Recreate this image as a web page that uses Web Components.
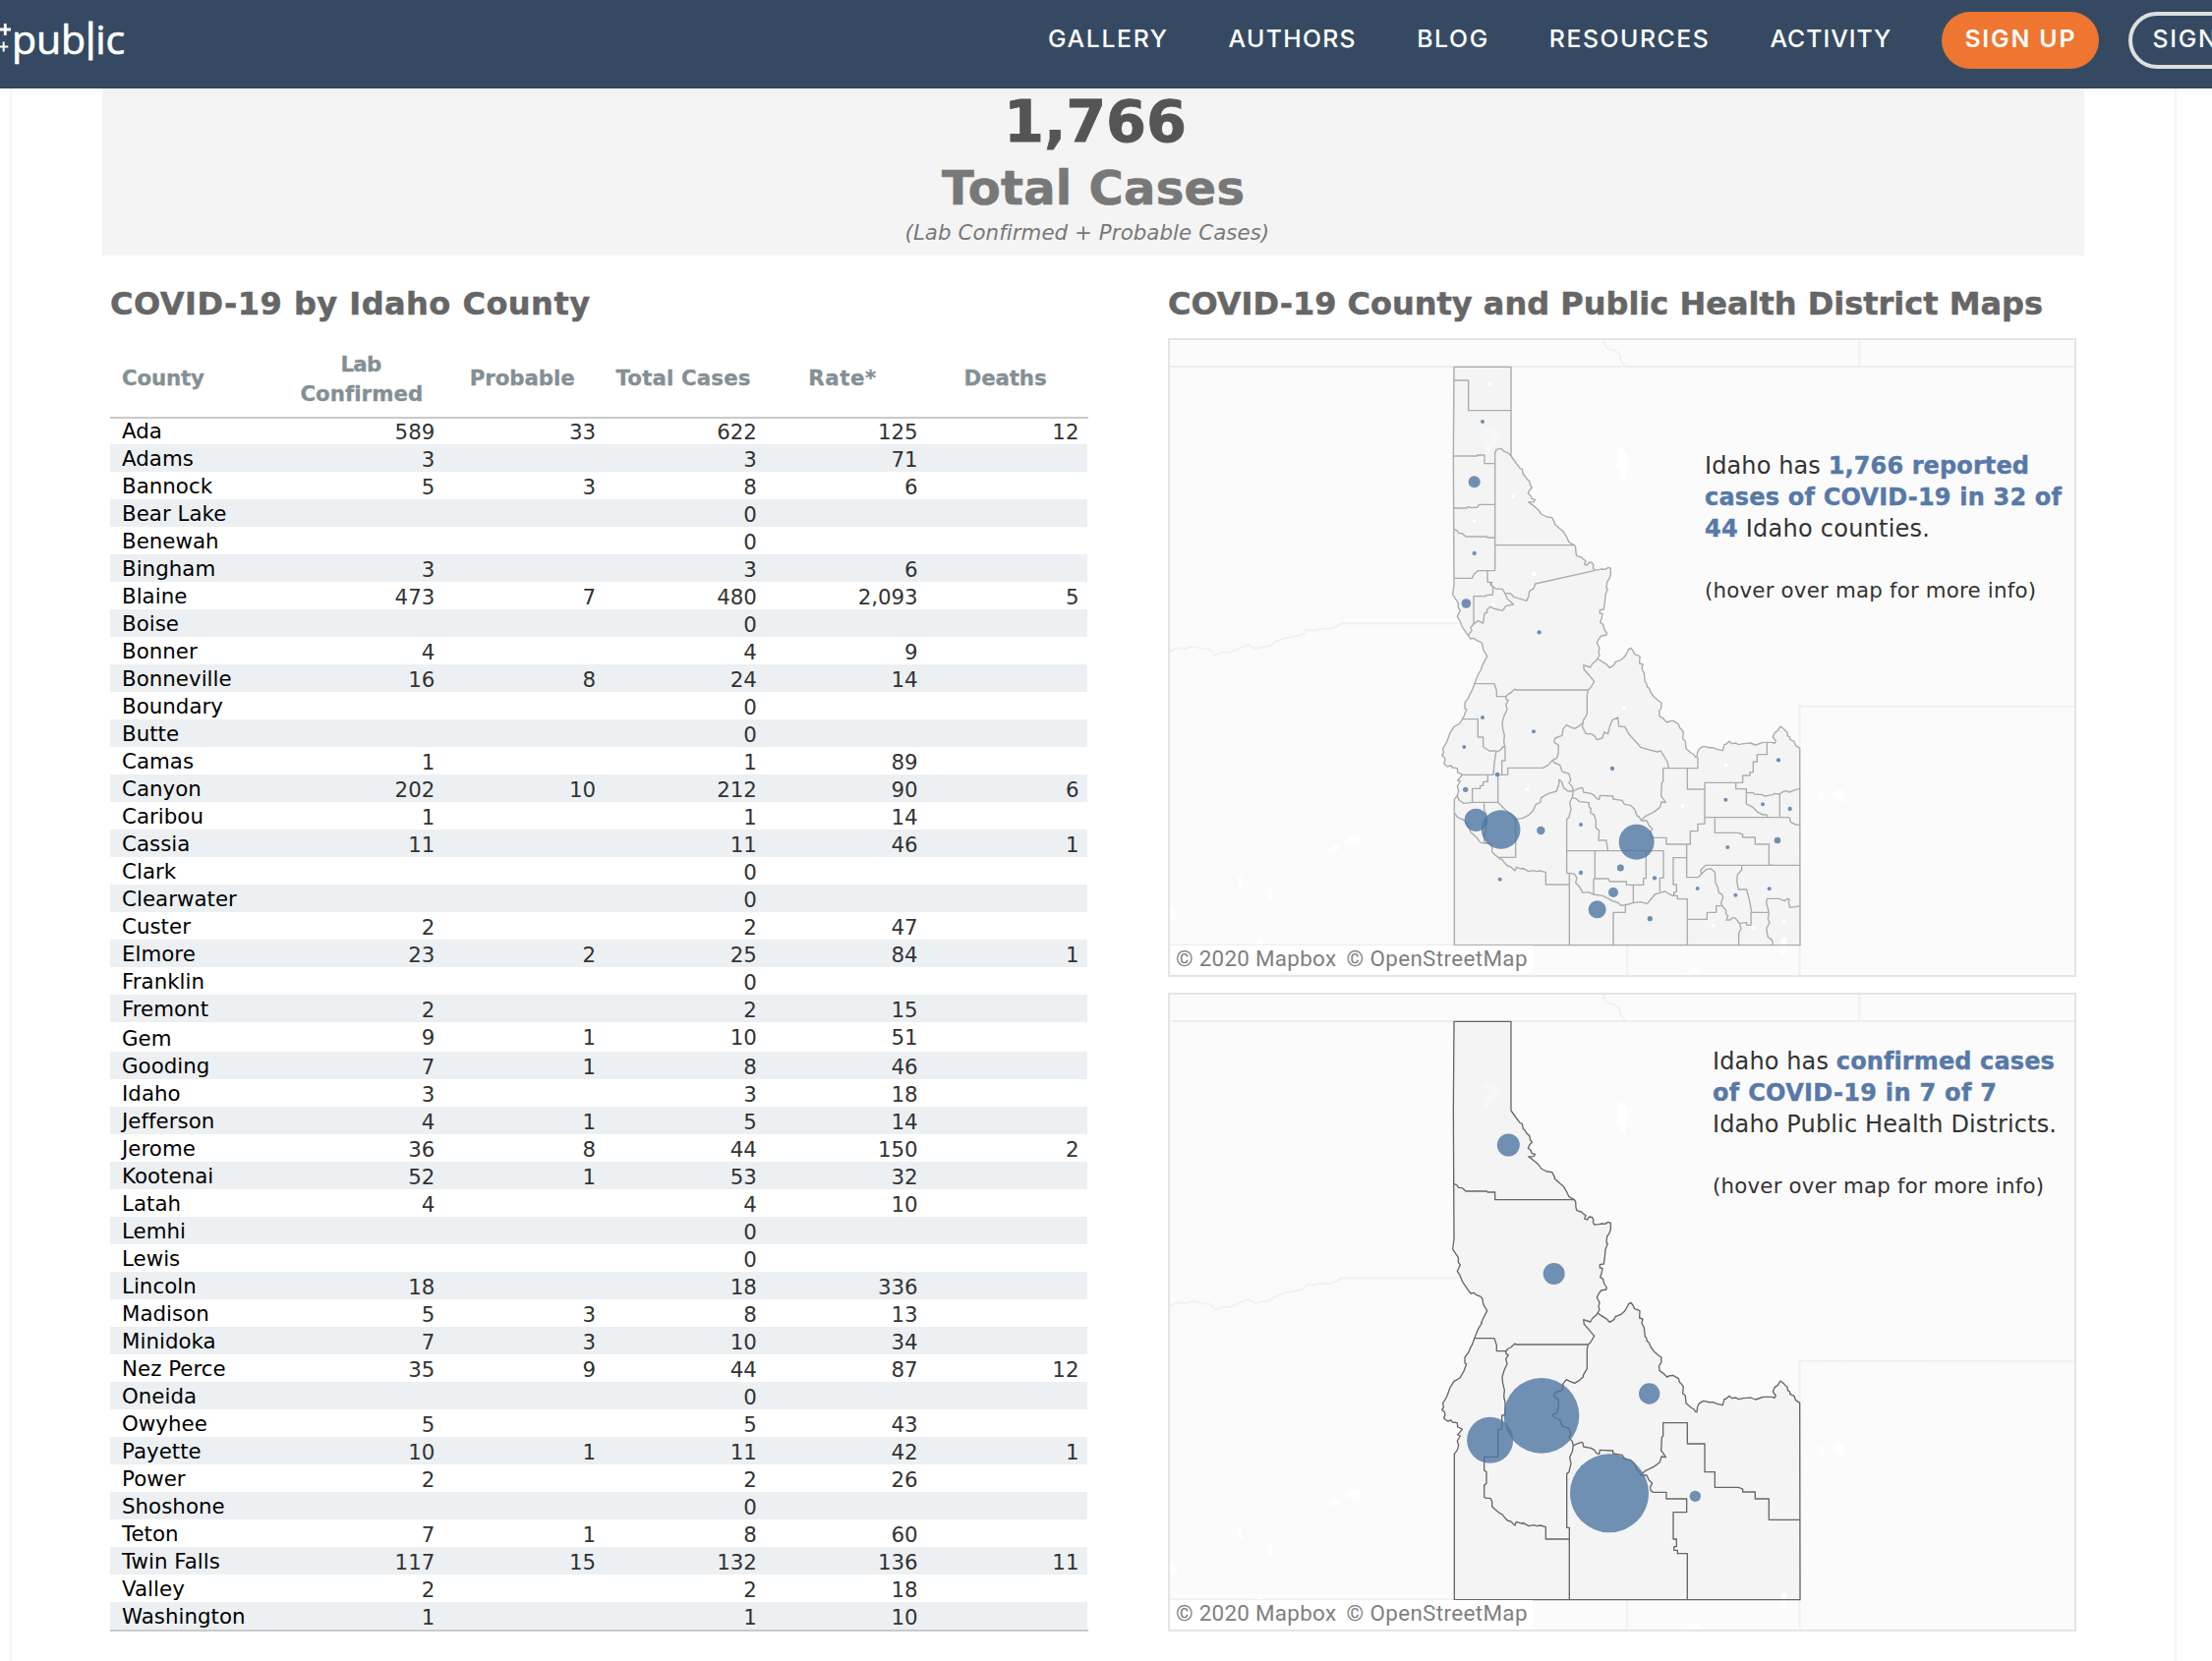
<!DOCTYPE html>
<html lang="en">
<head>
<meta charset="utf-8">
<title>COVID-19 in Idaho</title>
<style>
html,body{margin:0;height:1690px;overflow:hidden;background:#fff}
body{font-family:Verdana,"DejaVu Sans",sans-serif;color:#333}
</style>
</head>
<body>
<covid-page></covid-page>
<script>
const make = (host, html) => { host.attachShadow({mode:'open'}).innerHTML = html; return host.shadowRoot; };

/* A single line of text tracked so that it fills the width given in "w". */
customElements.define('fit-text', class extends HTMLElement {
  connectedCallback(){
    if (this.shadowRoot) return;
    const r = make(this, `<style>:host{display:block;white-space:nowrap;flex:none}span{display:inline-block}</style><span><slot></slot></span>`);
    const w = +this.getAttribute('w'), n = this.textContent.length;
    const nat = r.querySelector('span').getBoundingClientRect().width;
    this.style.letterSpacing = ((w - nat) / (n - 1)).toFixed(3) + 'px';
    this.style.width = w + 'px';
  }
});

customElements.define('site-header', class extends HTMLElement {
  connectedCallback(){
    make(this, `<style>
:host{display:flex;box-sizing:border-box;height:90px;background:#354a62;border-bottom:1px solid #2a4063;color:#fff;font-family:Inter,sans-serif;overflow:hidden}
.logo{display:flex;width:1066px;flex:none}
svg{width:12px;height:90px;flex:none}
.word{font:400 41px/56px "Open Sans",sans-serif;height:70px;padding-top:11px;letter-spacing:-.1px;-webkit-text-stroke:.7px #fff}
.word i{font-style:normal;display:inline-block;transform:translateY(3px) scaleY(1.27);transform-origin:50% 60%}
nav{display:flex;font-size:24.8px;line-height:30px;padding-top:12px;align-items:flex-start;font-weight:500}
nav>fit-text{margin:12px 62.6px 0 0}
.pill{box-sizing:border-box;height:58px;border-radius:29px;padding:12px 0 0 23px;flex:none}
.up{width:160px;background:#ee7630;margin:0 30px 0 -10.6px;font-weight:600}
.in{width:160px;border:4px solid #dedede;padding:8px 0 0 20px}
</style>
<div class="logo"><svg viewBox="0 0 12 90" fill="none" stroke="#fff"><path d="M-1 30H11M5.3 24V36" stroke-width="2.8"/><path d="M-1 47.5H8.3M3.7 42.5V52.5" stroke-width="2"/></svg><div class="word">pub<i>l</i>ic</div></div>
<nav><fit-text w="121">GALLERY</fit-text><fit-text w="129">AUTHORS</fit-text><fit-text w="72">BLOG</fit-text><fit-text w="162">RESOURCES</fit-text><fit-text w="123">ACTIVITY</fit-text>
<div class="pill up"><fit-text w="112">SIGN UP</fit-text></div><div class="pill in"><fit-text w="103">SIGN IN</fit-text></div></nav>`);
  }
});

customElements.define('total-banner', class extends HTMLElement {
  connectedCallback(){
    make(this, `<style>
:host{display:flex;flex-direction:column;align-items:center;box-sizing:border-box;height:170px;padding-top:4px;background:#f4f4f4;color:#787878}
.n{font:bold 59px/60px Verdana,"DejaVu Sans";color:#555;margin-left:4px;-webkit-text-stroke:.8px}
.t{font:bold 48px/50px Verdana,"DejaVu Sans";margin-top:11.5px;-webkit-text-stroke:.7px}
.s{font:italic 21.33px/30px Verdana,"DejaVu Sans";margin:6px 12px 0 0}
</style><fit-text class="n" w="186">1,766</fit-text><fit-text class="t" w="308">Total Cases</fit-text><fit-text class="s" w="371">(Lab Confirmed + Probable Cases)</fit-text>`);
  }
});

const ROWS = `Ada|589|33|622|125|12
Adams|3||3|71|
Bannock|5|3|8|6|
Bear Lake|||0||
Benewah|||0||
Bingham|3||3|6|
Blaine|473|7|480|2,093|5
Boise|||0||
Bonner|4||4|9|
Bonneville|16|8|24|14|
Boundary|||0||
Butte|||0||
Camas|1||1|89|
Canyon|202|10|212|90|6
Caribou|1||1|14|
Cassia|11||11|46|1
Clark|||0||
Clearwater|||0||
Custer|2||2|47|
Elmore|23|2|25|84|1
Franklin|||0||
Fremont|2||2|15|
Gem|9|1|10|51|
Gooding|7|1|8|46|
Idaho|3||3|18|
Jefferson|4|1|5|14|
Jerome|36|8|44|150|2
Kootenai|52|1|53|32|
Latah|4||4|10|
Lemhi|||0||
Lewis|||0||
Lincoln|18||18|336|
Madison|5|3|8|13|
Minidoka|7|3|10|34|
Nez Perce|35|9|44|87|12
Oneida|||0||
Owyhee|5||5|43|
Payette|10|1|11|42|1
Power|2||2|26|
Shoshone|||0||
Teton|7|1|8|60|
Twin Falls|117|15|132|136|11
Valley|2||2|18|
Washington|1||1|10|`.split('\n').map(r => r.split('|'));

customElements.define('county-table', class extends HTMLElement {
  connectedCallback(){
    make(this, `<style>
:host{display:block;width:995px;font-size:21.33px;line-height:28px}
.head,.row{display:grid;grid-template-columns:173.5px repeat(5,163.8px)}
.head{height:78px;align-items:center;font-weight:bold;color:#848f94;line-height:29.7px;justify-items:center;-webkit-text-stroke:.3px}
.head>:first-child{justify-self:start;margin-left:12px}
.head>:nth-child(5){margin-right:4px}
.two{display:flex;flex-direction:column;align-items:center;padding-top:1px}
.body{box-shadow:inset 0 2px #c9cacb;border-bottom:2px solid #c9cacb}
.row{height:28px;width:994px}
.row:nth-child(even){background:#ecf0f3}
.row:nth-child(23){height:30px}
.row:nth-child(23) b{padding-top:2.6px}
.row b{font-weight:400;color:#000;padding:.6px 0 0 12px;letter-spacing:.03px}
.row span{text-align:right;padding:2px 7px 0 0}
</style>
<div class="head"><fit-text w="84">County</fit-text><div class="two"><fit-text w="42">Lab</fit-text><fit-text w="124">Confirmed</fit-text></div><fit-text w="107">Probable</fit-text><fit-text w="137">Total Cases</fit-text><fit-text w="69">Rate*</fit-text><fit-text w="84">Deaths</fit-text></div>
<div class="body">${ROWS.map(([n, ...v]) => `<div class="row"><b>${n}</b>${v.map(x => `<span>${x}</span>`).join('')}</div>`).join('')}</div>`);
  }
});

/* Map geometry in thirds of a pixel. N: northern sheet, S: southern sheet. */
const OFF = 1020;
const S = (...d) => `<g transform="translate(0 ${OFF})">${d.map(x => `<path d="${x}"/>`).join('')}</g>`;
const N = (...d) => d.map(x => `<path d="${x}"/>`).join('');
const eastN = '117,100 291,100 291,372 306,393 318,409 325,412 328,428 333,432 340,443 347,448 350,462 355,468 348,476 343,486 352,494 354,502 365,505 360,512 344,513 352,518 364,527 375,537 383,549 400,558 416,560 424,575 424,580 440,594 450,602 461,620 468,635 484,644 488,650 489,668 492,677 505,681 512,687 519,692 515,702 523,705 530,696 538,697 543,706 541,712 545,720 560,719 568,717 578,718 588,712 595,715 595,735 590,748 584,756 582,775 586,778 579,796 577,820 574,840 562,842 562,852 570,853 567,870 563,880 572,886 575,900 583,912 582,918 566,921 558,932 553,942 561,958 558,970 561,980 555,990 570,1000 580,1006 592,1018 605,1010 610,1000 625,995 637,985 645,972 650,962 657,958 663,966 668,977 684,983 683,1005 693,1008';
const south = '690,0 697,15 700,42 704,45 706,56 712,60 718,75 728,88 741,99 750,105 749,122 743,130 744,146 757,155 768,166 772,162 785,160 802,170 806,182 810,185 817,195 815,215 823,222 825,245 840,258 850,264 853,271 858,272 860,255 866,245 878,238 900,243 905,241 920,247 937,251 942,232 947,232 957,223 965,230 977,228 985,233 1000,230 1022,228 1036,234 1046,231 1060,226 1072,226 1088,226 1095,229 1099,222 1090,210 1095,197 1105,190 1113,177 1125,187 1135,198 1135,206 1142,210 1142,217 1155,223 1159,235 1172,244 1173,845 118,845 118,400 127,388 131,374 127,360 136,345 128,342 142,325 138,322 128,318 127,305 112,303 108,297 97,300 86,291 90,280 88,272 80,265 85,258 83,245 95,225 105,197 117,178 135,168 148,145 155,125 150,123 150,105 160,92 165,80 173,65 180,45 190,20 202,0';
const westN = '200,1020 205,1008 218,983 207,965 203,945 199,940 186,935 177,928 168,930 160,920 150,905 143,895 135,875 127,862 136,843 130,835 130,820 118,803 113,795 117,765 115,370 117,100';
const shift = (p, d) => p.split(' ').map(q => { const [x, y] = q.split(','); return x + ',' + (+y + d); }).join(' ');
const STATE = 'M' + eastN + ' ' + shift(south, OFF) + ' ' + westN + 'Z';

const dist1 = 'M117,596L127,600 130,607 142,608 153,618 217,618 219,621 242,621';
const lemhi = 'M555,990L552,995 540,1005 533,1017 512,1010 514,1024 530,1042 545,1060 533,1080 527,1085';
const adamsTop = 'M180,47H240L247,68V86H275L283,78 290,75 303,63 306,66H527';
const adamsEast = 'M275,86L276,95 283,98 275,110 279,125 270,145 264,165 266,185 271,205 269,225 273,243V282H263V325';
const valleyEast = 'M527,65L523,80 523,140 511,160 511,165 500,175 485,184 470,178 460,173 450,185 447,205 425,213 422,225 436,235 435,260 430,275 417,280 423,288 440,295 447,315 468,322 473,340 468,350 478,362 481,375';
const blaineTop = 'M481,375L490,370 505,364 510,366 512,378 535,382 545,388 552,398 560,400 562,388 602,390 602,399 630,403 637,415 655,418 668,430 675,450 682,453 688,465';
const butteWest = 'M688,465L693,458 700,452 725,440 745,425 750,408 763,410 755,397 749,390 751,350 755,345V305H829V369H882V455H913V502H985L998,507V516H1036V537H1078V601H1172';
const blaineEast = 'M688,465L705,465 712,480 722,490 716,500 717,512 725,517H765V537H827V578H786V660H796V682L788,684V694H799V704H829V845';
const snake = 'M209,533L218,535 228,535 233,545 233,560 243,570 255,580 265,585 268,590 280,603 290,606 303,618 307,607 325,613 327,610 345,620 360,617 370,620 380,618 397,623V660H469';
const elmoreEast = 'M481,375L478,392 470,410 474,430 470,445 468,455 461,460V625H469V845';

const COUNTIES = N('M117,141H161V233H291','M117,372H188V369H210V395H242','M291,372L280,361 270,358 262,350 256,349 247,352 242,362 242,722','M117,531L155,531 160,527 170,530 188,528 194,520H242',dist1,'M242,644H484','M117,745H172L178,733 190,722H242','M219,722V757L233,757 229,766 245,777 265,778 272,790 290,792 300,803 320,808 338,814 345,800 347,785 360,776 365,762 545,722','M226,757L236,772 235,795 215,797 213,800H177V885','M272,790L280,808 298,825 275,830 265,844 240,838 227,832 217,842 218,850 210,852 206,882 190,875 177,885 168,895 171,905 160,920',lemhi)
 + S(adamsTop,adamsEast,'M142,325H237L240,290 245,255 258,250 266,240H273','M251,325H281V304H388L405,295 417,280','M142,155H190V210H206V240L225,252H245',valleyEast,
 'M481,375L465,375 452,365 445,345 437,340 438,350 430,375 405,382 383,395 380,410 367,415 358,435 345,448 325,458 305,460',blaineTop,butteWest,
 'M511,165L508,178 520,200 535,200 545,206 553,218 570,213 575,195 587,200 592,178 600,158 617,150 620,177 638,178 650,200 670,222 688,242 737,255 748,252 768,285 772,304','M829,305H861V272','M882,455V475H861V497H838V537H827',blaineEast,
 'M827,578V638H862L872,628 870,615 885,601H1090','M882,370V349H998V327H1020V317H1030V285H1042V263H1072V226','M977,349V368H1009V415','M1009,380L1030,380 1033,384 1060,386 1063,390 1090,386 1094,382 1110,384 1118,378 1130,374 1140,378 1160,370 1172,367','M1009,415L1018,418 1030,425 1045,440 1060,447 1070,447 1075,453','M1111,382V454','M913,455H1140L1145,470 1160,477 1172,478',
 'M127,388L132,402 147,412 173,409H251V325','M173,409V367H197V358H206V346H220V325','M119,442L128,455 145,462 160,478 168,500 185,515 198,532 218,535','M209,412V435L216,445V490L209,510V533',snake,'M251,409L270,428 305,460V577H250',elmoreEast,
 'M478,395L490,398 500,407 528,410 530,425 535,428 533,440 545,448 550,465 550,487 560,495 558,525H582L586,555','M461,557H756V640H745V682','M547,557V640L543,645V690','M547,642H588L592,651H643V661H695V641H703V557','M664,661V715',
 'M469,625L485,628 492,640 488,655 500,667 510,685 527,683 543,690 570,694 590,704 600,710 615,714 628,724 650,720 664,716 685,713 706,719 718,705 730,690 745,685 762,681 775,690 790,695','M640,722V745H603V845','M829,766H889V745H917V725H937',
 'M872,628L885,615 900,611 913,622 915,655 922,668 925,685 935,690 938,700 932,715 935,725 947,738 947,750 953,755 948,768 960,768 965,762 975,762 988,778 1010,776V784H1023V745H1075','M995,603V615L982,630 980,650 985,675 1010,675 1015,695 1020,715 1025,745','M1172,725L1160,728 1142,730 1138,715 1140,705 1135,703 1125,710 1110,703H1072L1070,715 1078,745 1075,765 1080,775 1070,795 1075,820 1088,830 1090,845','M988,778L993,795 986,808V845');
const DISTRICTS = N(dist1 + 'V644H484', lemhi) + S(adamsTop,adamsEast,'M263,325H251V409H209V450L216,455V490L209,495V533',valleyEast,blaineTop,butteWest,blaineEast,snake,elmoreEast);

const BASE = `<g fill="none" stroke="#f0f0f0" stroke-width="5"><path stroke="#eaeaea" d="M-756,99H2016"/><path d="M1354,12V99M570,12L580,38 592,46 605,48 622,60 625,80 640,97"/><path d="M-750,970L-730,958 -705,960 -675,953 -655,960 -630,962 -618,970 -615,982 -595,972 -568,972 -540,960 -512,948 -490,960 -445,952 -430,940 -400,928 -345,918 -332,902 -315,905 -280,898 -260,900 -240,892 -228,883H135"/><path d="M1172,1962V1135L2016,1137M-756,1864H118M645,1865V1962M-405,1864V1962"/></g>`;
const LAKES = `<g fill="#fff"><path d="M614,345L634,348 648,375 646,410 640,445 622,442 625,420 612,400 620,375Z"/><path d="M-220,1548L-195,1530 -168,1530 -166,1545 -185,1558ZM-264,1570L-245,1558 -228,1560 -238,1577H-258ZM-546,1650L-530,1655 -528,1685 -540,1682ZM-450,1693L-434,1695 -440,1733 -452,1728ZM-750,1755L-730,1762 -728,1795 -750,1785ZM-490,1857L-478,1848 -466,1850 -468,1862H-490ZM1272,1400L1296,1388 1308,1396 1306,1430 1290,1425ZM1234,1388L1244,1398 1248,1424 1230,1420ZM1116,1845L1130,1840 1133,1865 1122,1900 1113,1890ZM812,1955L850,1935 872,1938 870,1950Z"/><path fill="#f7f7f7" d="M200,290L215,285 240,292 245,305 258,322 235,338 222,365H206L212,335 236,322 222,302H200Z"/></g>`;

const dots = (list, fill, op) => `<g fill="${fill}" fill-opacity="${op}">${list.map(([x, y, r]) => `<circle cx="${x}" cy="${y}" r="${r}"/>`).join('')}</g>`;
const WHITE = [[226,154,6],[297,496,6],[179,571,6],[361,732,6],[236,825,6],[635,1142,6],[946,1315,6],[340,1390,6],[814,1440,6],[908,1805,6],[1032,1814,6],[1125,1793,6]];
const CASES = [[204,267,6],[179,451,18],[179,669,6.5],[154,822,14.5],[377,910,6.5],[204,1170,6],[360,1213,6],[148,1260,6],[249,1344,7],[152,1390,8],[600,1326,6.5],[184,1483,35],[260,1512,59.5],[382,1515,12.5],[504,1497,6],[674,1550,54],[625,1629,10.5],[504,1644,6.5],[729,1660,6.5],[257,1664,6],[603,1704,15],[554,1756,27],[715,1784,8],[1107,1300,6.5],[946,1421,6],[1059,1435,6],[1142,1449,6.5],[1104,1545,10],[952,1566,6],[860,1692,6],[976,1712,6],[1079,1693,6]];
const DCASES = [[283,477,34.5],[422,870,33],[713,1236,32],[384,1303,115],[227,1378,70.5],[591,1540,120],[853,1549,17]];

customElements.define('idaho-map', class extends HTMLElement {
  connectedCallback(){
    const d = this.getAttribute('kind') === 'district';
    make(this, `<style>
:host{display:grid;width:924px;height:650px;background:#fbfbfb;box-shadow:inset 0 0 0 2px #e5e5e5;overflow:hidden}
:host>*{grid-area:1/1}
svg{width:924px;height:650px;clip-path:inset(2px)}
.note{justify-self:start;align-self:start;z-index:1}
.attr{align-self:end;justify-self:start;z-index:1;display:flex;gap:10.5px;margin:0 0 4px 2px;padding:0 5px 1px 6px;background:#fffffff0;font:22.4px/27px Roboto,sans-serif;color:#7f7f7f}
</style>
<svg viewBox="-756 12 2772 1950">${BASE}<path d="${STATE}" fill="#f4f4f4"/>${LAKES}
<g fill="none" stroke="${d ? '#666' : '#a9adad'}" stroke-width="${d ? 4 : 4.2}" stroke-linejoin="round"><path d="${STATE}"/>${d ? DISTRICTS : COUNTIES}</g>
${d ? dots(DCASES, '#4e76a3', .8) : dots(WHITE, '#fff', 1) + dots(CASES, '#4e76a3', .8)}</svg>
<div class="note"><slot></slot></div>
<div class="attr"><fit-text w="163">© 2020 Mapbox</fit-text><fit-text w="184">© OpenStreetMap</fit-text></div>`);
  }
});

customElements.define('map-note', class extends HTMLElement {
  connectedCallback(){
    make(this, `<style>:host{display:block;font-size:24px;line-height:32px;color:#333}::slotted(.hint){font-size:21.33px;margin-top:31px}</style><slot></slot>`);
  }
});

customElements.define('section-title', class extends HTMLElement {
  connectedCallback(){
    make(this, `<style>:host{display:block;font-weight:bold;font-size:32px;line-height:40px;color:#666;-webkit-text-stroke:.5px}</style><slot></slot>`);
  }
});

customElements.define('covid-page', class extends HTMLElement {
  connectedCallback(){
    make(this, `<style>
:host{display:block;width:2250px;height:1690px;overflow:hidden}
.panel{box-sizing:border-box;height:1600px;margin:0 36px 0 10px;border:solid #f5f5f5;border-width:0 2px}
total-banner{margin-left:92px;width:2016px}
.cols{display:flex;padding:28.5px 0 0 100px}
.left{width:1076px;flex:none}
county-table{margin-top:17.5px}
.right{display:flex;flex-direction:column}
idaho-map{margin-top:15.5px}
idaho-map+idaho-map{margin-top:16px}
b{color:#5779a8;-webkit-text-stroke:.4px}
.n1{margin:114px 0 0 546px}
.n2{margin:54px 0 0 554px}
</style>
<site-header></site-header>
<div class="panel"><total-banner></total-banner>
<div class="cols">
<div class="left"><section-title><fit-text w="488">COVID-19 by Idaho County</fit-text></section-title><county-table></county-table></div>
<div class="right"><section-title><fit-text w="890">COVID-19 County and Public Health District Maps</fit-text></section-title>
<idaho-map kind="county"><map-note class="n1"><fit-text w="330">Idaho has <b>1,766 reported</b></fit-text><fit-text w="363"><b>cases of COVID-19 in 32 of</b></fit-text><fit-text w="229"><b>44</b> Idaho counties.</fit-text><fit-text class="hint" w="337">(hover over map for more info)</fit-text></map-note></idaho-map>
<idaho-map kind="district"><map-note class="n2"><fit-text w="347">Idaho has <b>confirmed cases</b></fit-text><fit-text w="289"><b>of COVID-19 in 7 of 7</b></fit-text><fit-text w="350">Idaho Public Health Districts.</fit-text><fit-text class="hint" w="337">(hover over map for more info)</fit-text></map-note></idaho-map>
</div></div></div>`);
  }
});
</script>
</body>
</html>
